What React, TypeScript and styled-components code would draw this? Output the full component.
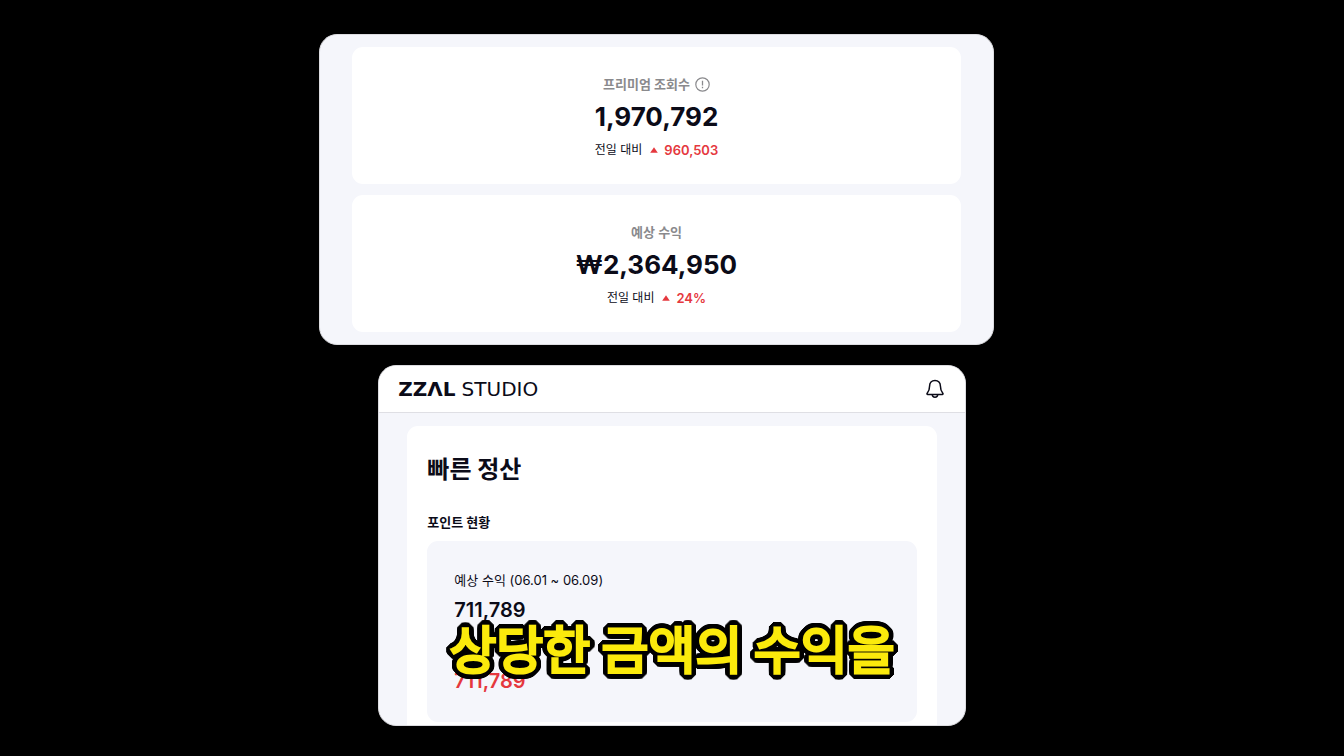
import React from 'react';
import styled, { createGlobalStyle } from 'styled-components';

const Global = createGlobalStyle`
  * { box-sizing: border-box; }
  body {
    margin: 0;
    background: #000;
    color: #0b0b18;
    font-family: Inter, "Noto Sans CJK KR", sans-serif;
  }
  h1, h2, p { margin: 0; }
`;

const Page = styled.main`
  position: relative;
  display: flex;
  flex-direction: column;
  align-items: center;
  gap: 20px;
  min-height: 100vh;
  padding: 34px 0 30px;
`;

const Panel = styled.section<{ $share: string; $shift: string }>`
  width: ${(p) => p.$share};
  margin-right: ${(p) => p.$shift};
  overflow: hidden;
  border: 1px solid #dcdce0;
  border-radius: 18px;
  background: #f5f6fb;
`;

const StatList = styled.div`
  display: flex;
  flex-direction: column;
  gap: 11px;
  padding: 12px 32px;
`;

const StatCard = styled.article`
  display: flex;
  flex-direction: column;
  align-items: center;
  height: 137px;
  padding-top: 27px;
  border-radius: 11px;
  background: #fff;
`;

const StatLabel = styled.h2`
  display: flex;
  align-items: center;
  gap: 5px;
  color: #8a8a8d;
  font-size: 13px;
  font-weight: 600;
  line-height: 20px;
`;

const StatValue = styled.p`
  margin-top: 6px;
  font-size: 26px;
  font-weight: 700;
  line-height: 34px;
`;

const Change = styled.p`
  display: flex;
  align-items: center;
  gap: 8px;
  margin-top: 6px;
  font-size: 12px;
  line-height: 20px;
`;

const Rise = styled.strong`
  display: flex;
  align-items: center;
  gap: 6px;
  color: #e5383e;
  font-size: 13px;
  font-weight: 600;
`;

const TopBar = styled.header`
  display: flex;
  align-items: center;
  justify-content: space-between;
  height: 47px;
  padding: 0 19px;
  border-bottom: 1px solid #dfdfe4;
  background: #fff;
`;

const Logo = styled.a`
  display: flex;
  align-items: center;
  gap: 6px;
  color: inherit;
  font-family: "DejaVu Sans", sans-serif;
  font-size: 20px;
  line-height: 24px;
  text-decoration: none;
`;

const LogoMark = styled.span`
  font-weight: 700;
`;

const IconButton = styled.button`
  display: flex;
  padding: 0;
  border: 0;
  background: none;
  color: inherit;
`;

const SheetArea = styled.div`
  padding: 13px 28px 0;
`;

const Sheet = styled.div`
  padding: 26px 20px 3px;
  border-radius: 11px 11px 0 0;
  background: #fff;
`;

const Title = styled.h1`
  font-size: 24px;
  font-weight: 700;
  line-height: 36px;
`;

const Subtitle = styled.h2`
  margin-top: 24px;
  font-size: 13px;
  font-weight: 700;
  line-height: 20px;
`;

const PointBox = styled.div`
  height: 181px;
  margin-top: 9px;
  padding: 29px 27px 0;
  border-radius: 11px;
  background: #f5f6fb;
`;

const PointLabel = styled.p`
  font-size: 13px;
  line-height: 20px;
`;

const Points = styled.p<{ $accent?: boolean }>`
  margin-top: ${(p) => (p.$accent ? '47px' : '8px')};
  color: ${(p) => (p.$accent ? '#e5383e' : 'inherit')};
  font-size: 20px;
  font-weight: 600;
  line-height: 24px;
`;

const ring = (radius: number, steps: number) =>
  Array.from({ length: steps }, (_, i) => {
    const a = (i * 2 * Math.PI) / steps;
    return `${Math.round(Math.cos(a) * radius)}px ${Math.round(Math.sin(a) * radius)}px 0 #000`;
  });

const outline = [...ring(6, 32), ...ring(3, 12)].join(', ');

const Caption = styled.p`
  position: absolute;
  right: 0;
  bottom: 71px;
  left: 0;
  color: #fbea0c;
  font-family: "Noto Sans CJK KR", sans-serif;
  font-size: 51px;
  font-weight: 400;
  line-height: 76px;
  text-align: center;
  stroke-linejoin: round;
  -webkit-text-stroke: 3px #fbea0c;
  text-shadow: ${outline};
`;

const InfoIcon = () => (
  <svg width="15" height="15" viewBox="0 0 15 15" fill="none" stroke="currentColor" aria-hidden="true">
    <circle cx="7.5" cy="7.5" r="6.7" strokeWidth="1.2" />
    <path d="M7.5 3.8v4.6M7.5 9.8v1.4" strokeWidth="1.3" />
  </svg>
);

const RiseIcon = () => (
  <svg width="8" height="6" viewBox="0 0 8 6" fill="currentColor" aria-hidden="true">
    <path d="M4 .2 7.8 5.8H.2z" />
  </svg>
);

const BellIcon = () => (
  <svg width="22" height="22" viewBox="0 0 22 22" fill="none" stroke="currentColor" strokeWidth="1.5" strokeLinejoin="round" aria-hidden="true">
    <path d="M11 2.5c-3.4 0-5.4 2.4-5.4 5.5 0 3.4-.9 5.4-2.4 7.2-.5.6-.2 1.3.5 1.3h14.600c.7 0 1-.7.5-1.300-1.500-1.800-2.400-3.800-2.400-7.200 0-3.100-2-5.500-5.400-5.500z" />
    <path d="M8.3 16.500a2.700 2.700 0 0 0 5.400 0" />
  </svg>
);

interface StatProps {
  label: string;
  value: string;
  change: string;
  info?: boolean;
}

const Stat = ({ label, value, change, info }: StatProps) => (
  <StatCard>
    <StatLabel>
      {label}
      {info && <InfoIcon />}
    </StatLabel>
    <StatValue>{value}</StatValue>
    <Change>
      전일 대비
      <Rise>
        <RiseIcon />
        {change}
      </Rise>
    </Change>
  </StatCard>
);

export default function App() {
  return (
    <>
      <Global />
      <Page>
        <Panel $share="50.2%" $shift="31px">
          <StatList>
            <Stat label="프리미엄 조회수" value="1,970,792" change="960,503" info />
            <Stat label="예상 수익" value="₩2,364,950" change="24%" />
          </StatList>
        </Panel>
        <Panel $share="43.7%" $shift="0px">
          <TopBar>
            <Logo href="#">
              <LogoMark>ZZΛL</LogoMark>
              <span>STUDIO</span>
            </Logo>
            <IconButton type="button" aria-label="알림">
              <BellIcon />
            </IconButton>
          </TopBar>
          <SheetArea>
            <Sheet>
              <Title>빠른 정산</Title>
              <Subtitle>포인트 현황</Subtitle>
              <PointBox>
                <PointLabel>예상 수익 (06.01 ~ 06.09)</PointLabel>
                <Points>711,789</Points>
                <Points $accent>711,789</Points>
              </PointBox>
            </Sheet>
          </SheetArea>
        </Panel>
        <Caption>상당한 금액의 수익을</Caption>
      </Page>
    </>
  );
}
